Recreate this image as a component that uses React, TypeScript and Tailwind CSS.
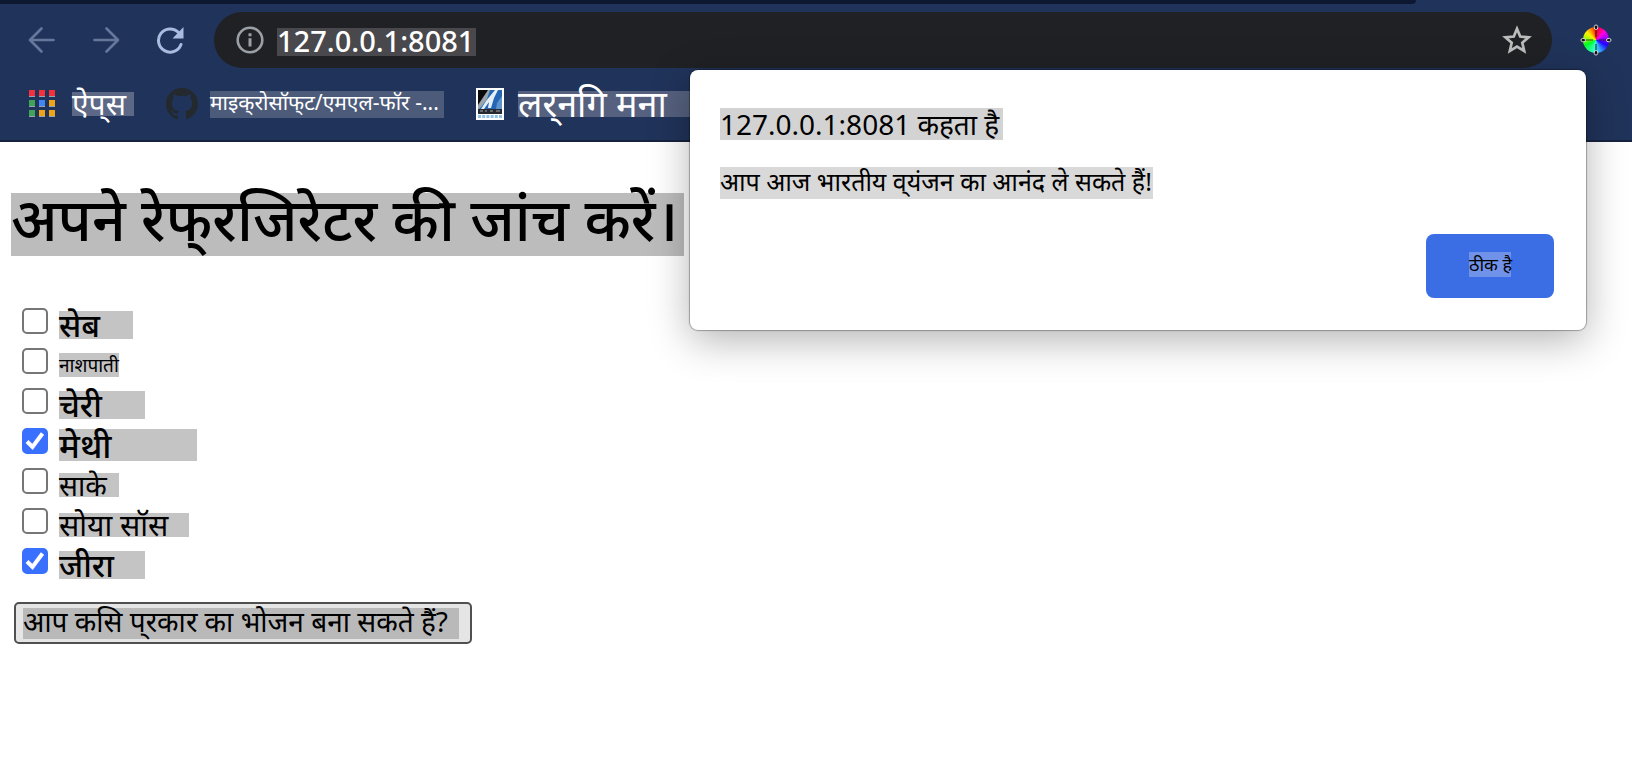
import type { ReactNode } from "react";

function Mark({ className, children }: { className: string; children: ReactNode }) {
  return (
    <span className={`inline-flex shrink-0 items-center whitespace-nowrap ${className}`}>{children}</span>
  );
}

const foods = [
  { id: "apple", label: "सेब", checked: false, style: "h-7 w-[74px] text-[32px] font-medium" },
  { id: "pear", label: "नाशपाती", checked: false, style: "h-6 w-[60px] text-[19px]" },
  { id: "cherry", label: "चेरी", checked: false, style: "h-7 w-[86px] text-[32px] font-medium" },
  { id: "fenugreek", label: "मेथी", checked: true, style: "h-8 w-[138px] text-[34px] font-medium" },
  { id: "sake", label: "साके", checked: false, style: "h-6 w-[60px] text-[28px]" },
  { id: "soy", label: "सोया सॉस", checked: false, style: "h-6 w-[130px] text-[30px]" },
  { id: "cumin", label: "जीरा", checked: true, style: "h-7 w-[86px] text-[32px] font-medium" },
];

function BackIcon() {
  return (
    <svg width="28" height="28" viewBox="0 0 28 28" fill="none" stroke="#65789c" strokeWidth="2.6" strokeLinecap="round" strokeLinejoin="round">
      <path d="M25.500 14H2.500M13.500 2.500 2 14l11.500 11.500" />
    </svg>
  );
}

function ForwardIcon() {
  return (
    <svg width="28" height="28" viewBox="0 0 28 28" fill="none" stroke="#65789c" strokeWidth="2.6" strokeLinecap="round" strokeLinejoin="round">
      <path d="M2.500 14h23M14.500 2.500 26 14 14.500 25.500" />
    </svg>
  );
}

function ReloadIcon() {
  return (
    <svg width="28" height="28" viewBox="0 0 28 28" fill="none">
      <path d="M22.5 6.5A11.6 11.6 0 1 0 25 18.5" stroke="#a9bbdf" strokeWidth="3" strokeLinecap="round" />
      <path d="M27.5 1v11.500H16.500z" fill="#a9bbdf" />
    </svg>
  );
}

function InfoIcon() {
  return (
    <svg width="28" height="28" viewBox="0 0 28 28" fill="none">
      <circle cx="14" cy="14" r="12.300" stroke="#9aa0a6" strokeWidth="2.600" />
      <path d="M12.500 7.300h3v3h-3zM12.500 12.300h3v8.200h-3z" fill="#9aa0a6" />
    </svg>
  );
}

function StarIcon() {
  return (
    <svg width="30" height="30" viewBox="0 0 30 30" fill="none" stroke="#bcbcbc" strokeWidth="2.700">
      <path d="M15 3.800 18.200 11.500 26.600 12.300 20.300 17.700 22.200 26 15 21.600 7.800 26 9.700 17.700 3.400 12.300 11.800 11.500z" />
    </svg>
  );
}

function AppsIcon() {
  const colors = ["#f4303d", "#f4303d", "#f4303d", "#3fa457", "#4285f4", "#eda41b", "#3fa457", "#eda41b", "#eda41b"];
  return (
    <svg width="28" height="28" viewBox="0 0 28 28">
      {colors.map((color, i) => (
        <g key={i}>
          <rect x={1 + (i % 3) * 10} y={Math.floor(i / 3) * 10 + 6} width="6" height="1" fill="#98a3ad" />
          <rect x={1 + (i % 3) * 10} y={Math.floor(i / 3) * 10} width="6" height="6" fill={color} />
        </g>
      ))}
    </svg>
  );
}

function GithubIcon() {
  return (
    <svg width="32" height="32" viewBox="0 0 16 16" fill="#24292e">
      <path d="M8 0C3.580 0 0 3.580 0 8c0 3.540 2.290 6.530 5.470 7.590.4.070.55-.17.55-.38 0-.19-.01-.82-.01-1.490-2.010.37-2.530-.49-2.690-.94-.09-.23-.48-.94-.82-1.130-.28-.15-.68-.52-.01-.53.63-.01 1.080.58 1.230.82.72 1.210 1.870.87 2.330.66.07-.52.28-.87.51-1.070-1.780-.2-3.640-.89-3.640-3.950 0-.87.31-1.590.82-2.150-.08-.2-.36-1.020.08-2.120 0 0 .67-.21 2.200.82.64-.18 1.320-.27 2-.27s1.360.09 2 .27c1.530-1.040 2.200-.82 2.200-.82.44 1.100.16 1.920.08 2.120.51.56.82 1.270.82 2.150 0 3.070-1.870 3.750-3.650 3.950.29.25.54.73.54 1.480 0 1.070-.01 1.930-.01 2.200 0 .21.15.46.55.38A8.010 8.010 0 0 0 16 8c0-4.420-3.580-8-8-8z" />
    </svg>
  );
}

function CampusIcon() {
  return (
    <svg width="28" height="32" viewBox="0 0 28 32">
      <path d="M0 0h28v32H0z" fill="#fff" />
      <path d="M2 2h24v20H2z" fill="#2566b4" />
      <path d="M2 2h12L10 8 5 14 2 20z" fill="#0a0a0a" />
      <path d="M12 2h2l-3 9-5 7-4 4v-5l4-6z" fill="#9aa5b0" />
      <path d="M19 2h3l-4 8-3 10h-3l1-6-5 7H5l5-8z" fill="#e5eff8" />
      <path d="M21 15l5-7v13h-6z" fill="#5e93ce" />
      <path d="M2 21h24v5H2z" fill="#26292f" />
      <path d="M4 23h3m2 0h2m3 0h3m3 0h4" stroke="#777c84" strokeWidth="1.500" />
      <path d="M2 28.500h24" stroke="#8fc0e6" strokeWidth="3" strokeDasharray="3 1.200" />
    </svg>
  );
}

function ColorWheel() {
  return (
    <svg width="32" height="32" viewBox="0 0 32 32">
      <foreignObject x="3" y="3" width="26" height="26">
        <div className="h-full w-full rounded-full bg-[conic-gradient(#f01,#f0d_45deg,#a0f_75deg,#20f_115deg,#3af_160deg,#3fc_190deg,#0f2_245deg,#9f0_275deg,#fe0_310deg,#f70_340deg,#f01)]" />
      </foreignObject>
      <path d="M16 3v10m0 7v9M3 16h10m6 0h10" stroke="#1e1e1e" strokeWidth="1.200" opacity=".8" />
      <g fill="#111" stroke="#d5d8dc" strokeWidth="1">
        <rect x="14.300" y="1" width="3.400" height="4.500" rx="1.600" />
        <rect x="14.300" y="26.500" width="3.400" height="4.500" rx="1.600" />
        <rect x="1" y="14.500" width="4.500" height="3.200" rx="1.600" />
        <rect x="26.500" y="14.500" width="4.500" height="3.200" rx="1.600" />
      </g>
    </svg>
  );
}

export default function App() {
  return (
    <div className="relative min-h-screen overflow-hidden bg-white font-['Noto_Sans','Noto_Sans_Devanagari',sans-serif] leading-none text-black">
      <header className="border-b-2 border-[#16223f] bg-[#20335a]">
        <div className="mr-[216px] h-1 rounded-br-lg bg-[#0d1830]" />
        <div className="flex items-center pt-2 pr-5 pl-7">
          <nav className="flex items-center gap-9" aria-label="Navigation">
            <button type="button" aria-label="Back"><BackIcon /></button>
            <button type="button" aria-label="Forward"><ForwardIcon /></button>
            <button type="button" aria-label="Reload"><ReloadIcon /></button>
          </nav>
          <div className="ml-[30px] flex h-14 flex-1 items-center rounded-full bg-[#202124] pr-5 pl-[22px]">
            <InfoIcon />
            <Mark className="mt-1 ml-[13px] h-7 w-[199px] bg-[#49484c] pb-1 text-[29px] font-medium text-white">127.0.0.1:8081</Mark>
            <button type="button" aria-label="Bookmark" className="ml-auto"><StarIcon /></button>
          </div>
          <button type="button" aria-label="Color picker" className="ml-7"><ColorWheel /></button>
        </div>
        <div className="flex h-[72px] items-center pl-7 text-white">
          <a href="#apps" className="flex items-center gap-4">
            <AppsIcon />
            <Mark className="h-6 w-[62px] bg-[#5c6886] text-[30px]">ऐप्‌स</Mark>
          </a>
          <a href="#github" className="ml-8 flex items-center gap-3">
            <GithubIcon />
            <Mark className="h-[27px] w-[234px] bg-[#4c5b79] pb-1 text-[21px]">माइक्‌रोसॉफ्‌ट/एमएल-फॉर -...</Mark>
          </a>
          <a href="#learning" className="ml-8 flex items-center gap-[14px]">
            <CampusIcon />
            <Mark className="h-[26px] w-[180px] bg-[#55617f] text-[36px]">लर्‌नगि मना</Mark>
          </a>
        </div>
      </header>

      <main className="pl-[11px]">
        <h1 className="pt-[51px]">
          <Mark className="h-[63px] w-[673px] bg-[#bcbcbc] pb-3 text-[59px] font-medium">अपने रेफ्‌रजिरेटर की जांच करें।</Mark>
        </h1>
        <ul className="mt-[47px] pl-[11px]">
          {foods.map((food) => (
            <li key={food.id} className="flex h-10 items-center">
              <span className="relative mb-1 h-[26px] w-[26px]">
                <input
                  id={food.id}
                  type="checkbox"
                  defaultChecked={food.checked}
                  className="peer block h-[26px] w-[26px] appearance-none rounded-[5px] border-2 border-[#767676] bg-white checked:border-[#3970ff] checked:bg-[#3970ff]"
                />
                <svg className="pointer-events-none absolute inset-0 hidden peer-checked:block" width="26" height="26" viewBox="0 0 26 26" fill="none" stroke="#fff" strokeWidth="4">
                  <path d="m5 13.500 5.500 5.500L20.500 5.500" />
                </svg>
              </span>
              <label htmlFor={food.id} className="ml-[11px] flex pt-1">
                <Mark className={`bg-[#c4c4c4] ${food.style}`}>{food.label}</Mark>
              </label>
            </li>
          ))}
        </ul>
        <button type="button" className="mt-[19px] ml-[3px] flex h-[42px] w-[458px] items-center rounded-[5px] border-2 border-[#505050] bg-[#e5e5e5] pl-[7px]">
          <Mark className="h-[31px] w-[436px] bg-[#b9b9b9] pb-1 text-[28px]">आप कसि प्‌रकार का भोजन बना सकते हैं?</Mark>
        </button>
      </main>

      <section
        role="dialog"
        aria-labelledby="dialog-title"
        className="absolute top-[70px] right-[46px] flex w-[896px] flex-col items-start rounded-lg bg-white pt-[38px] pr-8 pb-8 pl-[30px] shadow-[0_0_1px_1px_rgba(0,0,0,0.3),0_10px_40px_rgba(0,0,0,0.3)]"
      >
        <h2 id="dialog-title" className="flex">
          <Mark className="h-8 w-[283px] bg-[#d3d3d3] text-[28px]">127.0.0.1:8081 कहता है</Mark>
        </h2>
        <p className="mt-[27px] flex">
          <Mark className="h-8 w-[433px] bg-[#d9d9d9] pb-1 text-[25px]">आप आज भारतीय व्‌यंजन का आनंद ले सकते हैं!</Mark>
        </p>
        <button type="button" className="mt-[35px] flex h-16 w-32 items-center justify-center self-end rounded-lg bg-[#3b6de4]">
          <Mark className="mb-1 h-[25px] w-[42px] bg-[#7192e9] text-[18px]">ठीक है</Mark>
        </button>
      </section>
    </div>
  );
}
